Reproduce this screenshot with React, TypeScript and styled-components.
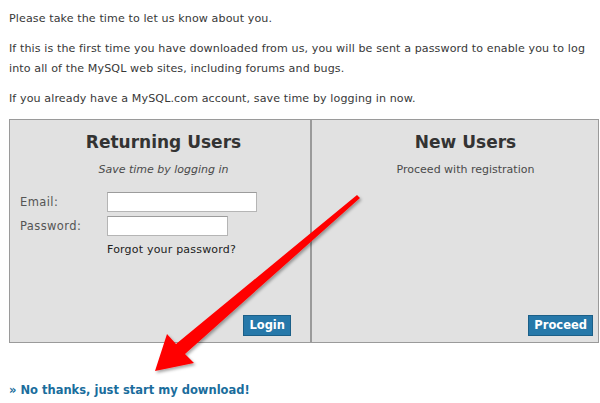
import styled, { createGlobalStyle } from 'styled-components';

const GlobalStyle = createGlobalStyle`
  html, body {
    margin: 0;
    padding: 0;
    background: #ffffff;
  }
  body {
    font-family: "DejaVu Sans", Verdana, sans-serif;
    color: #383838;
  }
`;

const Page = styled.div`
  position: relative;
  width: 600px;
  height: 403px;
  padding: 9px 0 0 9px;
  box-sizing: border-box;
  overflow: hidden;
`;

const Para = styled.p`
  margin: 0 0 10px;
  font-size: 11.1px;
  line-height: 20px;
  width: 591px;
  letter-spacing: 0.1px;
`;

const Boxes = styled.div`
  display: flex;
  width: 590px;
  height: 224px;
  margin-top: 10px;
`;

const Panel = styled.div<{ $grow: number; $padRight: number }>`
  flex: 0 0 ${({ $grow }) => $grow}px;
  box-sizing: border-box;
  display: flex;
  flex-direction: column;
  background: #e1e1e1;
  border: 1px solid #9a9a9a;
  padding: 0 ${({ $padRight }) => $padRight}px 6px 10px;
`;

const PanelHead = styled.div`
  padding-left: 16px;
  text-align: center;
`;

const Title = styled.h2`
  margin: 11px 0 0;
  font-size: 17px;
  line-height: 22px;
  font-weight: 700;
  color: #333;
`;

const Sub = styled.div<{ $italic?: boolean }>`
  margin-top: 8px;
  font-size: 11px;
  line-height: 18px;
  color: #4a4a4a;
  font-style: ${({ $italic }) => ($italic ? 'italic' : 'normal')};
`;

const Form = styled.div`
  display: grid;
  grid-template-columns: 87px auto;
  row-gap: 4px;
  margin-top: 13px;
  align-items: center;
`;

const Label = styled.label`
  font-size: 11.5px;
  color: #555;
  letter-spacing: 0.4px;
`;

const Input = styled.input<{ $w: number }>`
  width: ${({ $w }) => $w}px;
  height: 20px;
  box-sizing: border-box;
  border: 1px solid #b5b5b5;
  border-top-color: #9c9c9c;
  background: #fff;
  padding: 0 3px;
  margin: 0;
  outline: none;
`;

const Forgot = styled.a`
  grid-column: 2;
  margin-top: 1px;
  font-size: 11px;
  line-height: 18px;
  color: #222;
  text-decoration: none;
  letter-spacing: 0.2px;
`;

const Actions = styled.div`
  margin-top: auto;
  display: flex;
  justify-content: flex-end;
`;

const Button = styled.button`
  height: 21px;
  padding: 0 5px;
  border: 1px solid #1b5f88;
  background: #2678a9;
  color: #fff;
  font-family: "DejaVu Sans", Verdana, sans-serif;
  font-weight: 700;
  font-size: 11.5px;
  line-height: 19px;
  cursor: pointer;
`;

const SkipLink = styled.a`
  display: block;
  margin-top: 38px;
  font-size: 11.5px;
  font-weight: 700;
  line-height: 18px;
  color: #1a6d9c;
  text-decoration: none;
`;

const Overlay = styled.svg`
  position: absolute;
  left: 0;
  top: 0;
  pointer-events: none;
`;

function Arrow() {
  return (
    <Overlay width={600} height={403} viewBox="0 0 600 403">
      <defs>
        <filter id="sh" x="-20%" y="-20%" width="140%" height="140%">
          <feDropShadow dx="1.5" dy="2" stdDeviation="1.5" floodColor="#000" floodOpacity="0.35" />
        </filter>
      </defs>
      <polygon
        points="357,195 176,344 167,334 155,371 194,363 185,354 360,198"
        fill="#ff0000"
        filter="url(#sh)"
      />
    </Overlay>
  );
}

export default function App() {
  return (
    <>
      <GlobalStyle />
      <Page>
        <Para>Please take the time to let us know about you.</Para>
        <Para>
          If this is the first time you have downloaded from us, you will be sent a password to enable you to log
          into all of the MySQL web sites, including forums and bugs.
        </Para>
        <Para>If you already have a MySQL.com account, save time by logging in now.</Para>

        <Boxes>
          <Panel $grow={302} $padRight={19}>
            <PanelHead>
              <Title>Returning Users</Title>
              <Sub $italic>Save time by logging in</Sub>
            </PanelHead>
            <Form>
              <Label>Email:</Label>
              <Input $w={150} type="text" />
              <Label>Password:</Label>
              <Input $w={121} type="password" />
              <Forgot href="#">Forgot your password?</Forgot>
            </Form>
            <Actions>
              <Button>Login</Button>
            </Actions>
          </Panel>
          <Panel $grow={288} $padRight={5}>
            <PanelHead>
              <Title>New Users</Title>
              <Sub>Proceed with registration</Sub>
            </PanelHead>
            <Actions>
              <Button>Proceed</Button>
            </Actions>
          </Panel>
        </Boxes>

        <SkipLink href="#">» No thanks, just start my download!</SkipLink>
        <Arrow />
      </Page>
    </>
  );
}
